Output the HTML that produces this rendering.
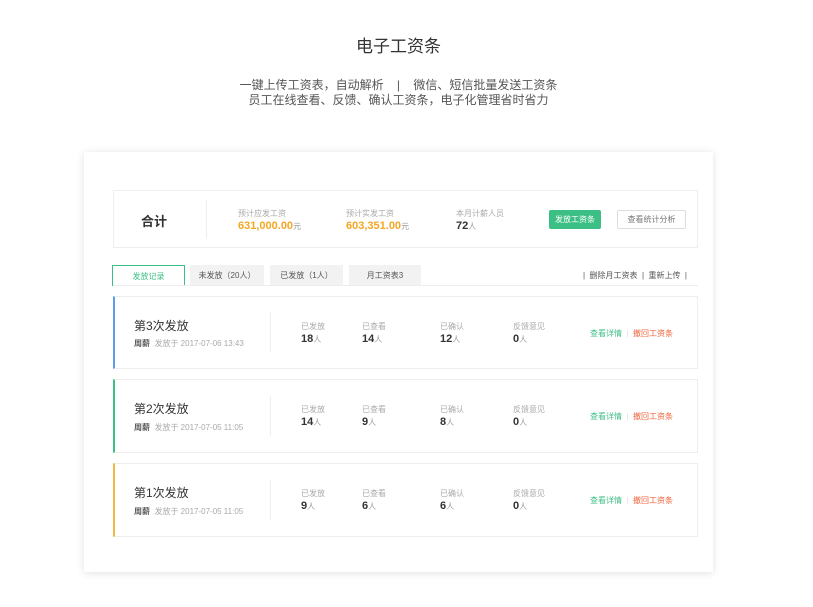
<!DOCTYPE html><html><head><meta charset="utf-8"><style>
*{margin:0;padding:0;box-sizing:border-box}
body{width:813px;height:607px;background:#fff;font-family:"Liberation Sans","Noto Sans CJK SC",sans-serif;position:relative;overflow:hidden;color:#333}
.a{position:absolute;white-space:nowrap}
.card{position:absolute;left:84px;top:152px;width:629px;height:420px;background:#fff;box-shadow:0 1px 8px rgba(0,0,0,.12)}
.box{position:absolute;border:1px solid #eee;background:#fff}
.lbl{font-size:8px;color:#aaa}
.num{font-size:11px;font-weight:bold;color:#333}
.num small{font-size:8px;font-weight:normal;color:#999}
.or{color:#f5a623}
.tab{position:absolute;top:265px;height:21px;font-size:8px;color:#555;background:#f2f2f2;text-align:center;line-height:21px}
</style></head><body>
<div class="a" style="left:0;width:797px;text-align:center;top:32px;font-size:17px;color:#333">电子工资条</div>
<div class="a" style="left:0;width:797px;text-align:center;top:78px;font-size:12px;color:#555;line-height:15px">一键上传工资表，自动解析 &nbsp; &nbsp;| &nbsp; &nbsp;微信、短信批量发送工资条<br>员工在线查看、反馈、确认工资条，电子化管理省时省力</div>
<div class="card"></div>
<div class="box" style="left:113px;top:190px;width:585px;height:58px"></div>
<div class="a" style="left:141px;top:211px;font-size:13px;font-weight:bold">合计</div>
<div class="a" style="left:206px;top:200px;width:1px;height:39px;background:#eee"></div>
<div class="a lbl" style="left:238px;top:208px">预计应发工资</div>
<div class="a num or" style="left:238px;top:220px">631,000.00<small>元</small></div>
<div class="a lbl" style="left:346px;top:208px">预计实发工资</div>
<div class="a num or" style="left:346px;top:220px">603,351.00<small>元</small></div>
<div class="a lbl" style="left:456px;top:208px">本月计薪人员</div>
<div class="a num" style="left:456px;top:220px">72<small>人</small></div>
<div class="a" style="left:549px;top:210px;width:52px;height:19px;background:#3cbf85;color:#fff;font-size:8px;text-align:center;line-height:19px;border-radius:2px">发放工资条</div>
<div class="a" style="left:617px;top:210px;width:69px;height:19px;border:1px solid #ddd;color:#777;font-size:8px;text-align:center;line-height:17px;border-radius:2px">查看统计分析</div>
<div class="tab" style="left:112px;width:73px;background:#fff;border:1px solid #3cbf85;border-bottom:none;color:#3cbf85">发放记录</div>
<div class="tab" style="left:190px;width:74px">未发放（20人）</div>
<div class="tab" style="left:270px;width:73px">已发放（1人）</div>
<div class="tab" style="left:349px;width:72px">月工资表3</div>
<div class="a" style="left:113px;top:285px;width:585px;height:1px;background:#eee"></div>
<div class="a" style="left:583px;top:270px;font-size:8px;color:#555">| &nbsp;删除月工资表 &nbsp;| &nbsp;重新上传 &nbsp;|</div>
<div class="box" style="left:113px;top:296px;width:585px;height:73px;border-left:2px solid #5b9ef0"></div>
<div class="box" style="left:113px;top:379px;width:585px;height:74px;border-left:2px solid #3cbf85"></div>
<div class="box" style="left:113px;top:463px;width:585px;height:74px;border-left:2px solid #f5b640"></div>
<div class="a" style="left:134px;top:317px;font-size:12px">第3次发放</div>
<div class="a" style="left:134px;top:338px;font-size:8px;color:#aaa"><b style="color:#555">周薪</b> &nbsp;发放于 2017-07-06 13:43</div>
<div class="a" style="left:270px;top:312px;width:1px;height:40px;background:#eee"></div>
<div class="a lbl" style="left:301px;top:321px">已发放</div><div class="a num" style="left:301px;top:333px">18<small>人</small></div>
<div class="a lbl" style="left:362px;top:321px">已查看</div><div class="a num" style="left:362px;top:333px">14<small>人</small></div>
<div class="a lbl" style="left:440px;top:321px">已确认</div><div class="a num" style="left:440px;top:333px">12<small>人</small></div>
<div class="a lbl" style="left:513px;top:321px">反馈意见</div><div class="a num" style="left:513px;top:333px">0<small>人</small></div>
<div class="a" style="left:590px;top:328px;font-size:8px;color:#3cbf85">查看详情 <span style="color:#ddd">&nbsp;|&nbsp;</span> <span style="color:#f0643c">撤回工资条</span></div>

<div class="a" style="left:134px;top:400px;font-size:12px">第2次发放</div>
<div class="a" style="left:134px;top:422px;font-size:8px;color:#aaa"><b style="color:#555">周薪</b> &nbsp;发放于 2017-07-05 11:05</div>
<div class="a" style="left:270px;top:396px;width:1px;height:40px;background:#eee"></div>
<div class="a lbl" style="left:301px;top:404px">已发放</div><div class="a num" style="left:301px;top:416px">14<small>人</small></div>
<div class="a lbl" style="left:362px;top:404px">已查看</div><div class="a num" style="left:362px;top:416px">9<small>人</small></div>
<div class="a lbl" style="left:440px;top:404px">已确认</div><div class="a num" style="left:440px;top:416px">8<small>人</small></div>
<div class="a lbl" style="left:513px;top:404px">反馈意见</div><div class="a num" style="left:513px;top:416px">0<small>人</small></div>
<div class="a" style="left:590px;top:411px;font-size:8px;color:#3cbf85">查看详情 <span style="color:#ddd">&nbsp;|&nbsp;</span> <span style="color:#f0643c">撤回工资条</span></div>

<div class="a" style="left:134px;top:484px;font-size:12px">第1次发放</div>
<div class="a" style="left:134px;top:506px;font-size:8px;color:#aaa"><b style="color:#555">周薪</b> &nbsp;发放于 2017-07-05 11:05</div>
<div class="a" style="left:270px;top:480px;width:1px;height:40px;background:#eee"></div>
<div class="a lbl" style="left:301px;top:488px">已发放</div><div class="a num" style="left:301px;top:500px">9<small>人</small></div>
<div class="a lbl" style="left:362px;top:488px">已查看</div><div class="a num" style="left:362px;top:500px">6<small>人</small></div>
<div class="a lbl" style="left:440px;top:488px">已确认</div><div class="a num" style="left:440px;top:500px">6<small>人</small></div>
<div class="a lbl" style="left:513px;top:488px">反馈意见</div><div class="a num" style="left:513px;top:500px">0<small>人</small></div>
<div class="a" style="left:590px;top:495px;font-size:8px;color:#3cbf85">查看详情 <span style="color:#ddd">&nbsp;|&nbsp;</span> <span style="color:#f0643c">撤回工资条</span></div>
</body></html>
